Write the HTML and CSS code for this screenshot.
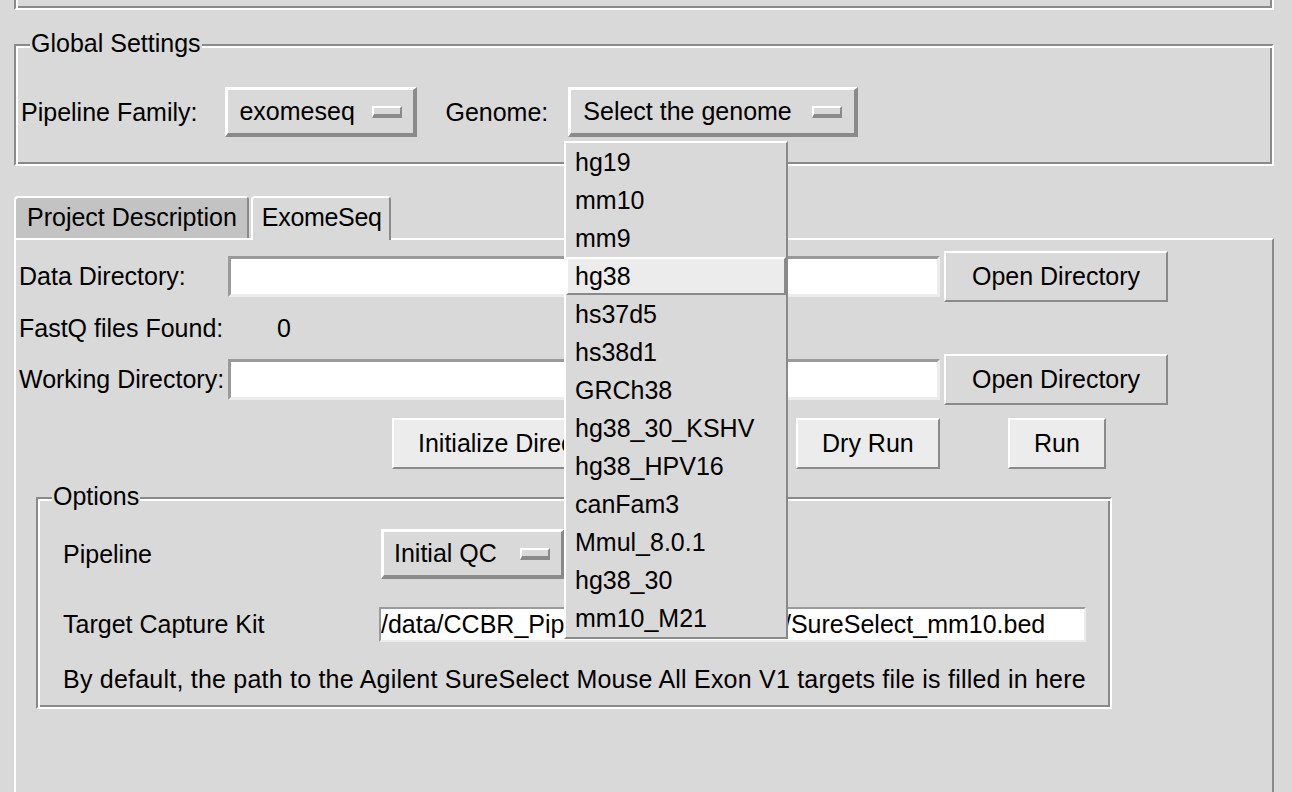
FILE: index.html
```html
<!DOCTYPE html>
<html lang="en">
<head>
<meta charset="utf-8">
<title>CCBR Pipeliner</title>
<link rel="stylesheet" href="styles.css">
</head>
<body>
<div class="top-frame"></div>

<section class="labelframe global">
  <div class="lf-title">Global Settings</div>
  <div class="global-row">
    <span class="label">Pipeline Family:</span>
    <div class="menubutton mb-family"><span>exomeseq</span><i class="indicator"></i></div>
    <span class="label genome-label">Genome:</span>
    <div class="menubutton mb-genome"><span>Select the genome</span><i class="indicator"></i></div>
  </div>
</section>

<div class="notebook">
  <div class="tabs">
    <div class="tab">Project Description</div>
    <div class="tab selected">ExomeSeq</div>
  </div>
  <div class="pane">
    <div class="dir-grid">
      <span class="label">Data Directory:</span>
      <input class="entry" type="text" aria-label="Data Directory">
      <button class="btn wide">Open Directory</button>

      <span class="label">FastQ files Found:</span>
      <span class="count">0</span>
      <span></span>

      <span class="label">Working Directory:</span>
      <input class="entry" type="text" aria-label="Working Directory">
      <button class="btn wide">Open Directory</button>
    </div>

    <div class="actions">
      <button class="btn light">Initialize Directory</button>
      <button class="btn light">Dry Run</button>
      <button class="btn light">Run</button>
    </div>

    <section class="labelframe options">
      <div class="lf-title">Options</div>
      <div class="opt-grid">
        <span class="opt-label">Pipeline</span>
        <div class="menubutton mb-pipeline"><span>Initial QC</span><i class="indicator"></i></div>
        <span class="opt-label">Target Capture Kit</span>
        <input class="entry kit" type="text" readonly value="/data/CCBR_Pipeliner/db/PipeDB/lib/SureSelect_mm10.bed" aria-label="Target Capture Kit">
      </div>
      <p class="help">By default, the path to the Agilent SureSelect Mouse All Exon V1 targets file is filled in here</p>
    </section>
  </div>
</div>

<ul class="menu">
  <li>hg19</li>
  <li>mm10</li>
  <li>mm9</li>
  <li class="active">hg38</li>
  <li>hs37d5</li>
  <li>hs38d1</li>
  <li>GRCh38</li>
  <li>hg38_30_KSHV</li>
  <li>hg38_HPV16</li>
  <li>canFam3</li>
  <li>Mmul_8.0.1</li>
  <li>hg38_30</li>
  <li>mm10_M21</li>
</ul>
</body>
</html>
```

FILE: styles.css
```css
* {
  box-sizing: border-box;
}

html,
body {
  margin: 0;
  padding: 0;
}

body {
  position: relative;
  width: 1292px;
  height: 792px;
  overflow: hidden;
  background: #d9d9d9;
  color: #000;
  font-family: "Liberation Sans", Arial, Helvetica, sans-serif;
  font-size: 25px;
  line-height: 29px;
}

/* ---------- groove frames ---------- */
.top-frame {
  margin-left: 14px;
  width: 1260px;
  height: 10px;
  border-style: solid;
  border-width: 0 2px 2px 2px;
  border-color: #8a8a8a #fff #fff #8a8a8a;
  box-shadow: inset 2px 0 0 #fff, inset -2px -2px 0 #8a8a8a;
}

.labelframe {
  border-style: solid;
  border-width: 2px;
  border-color: #8a8a8a #fff #fff #8a8a8a;
  box-shadow: inset 2px 2px 0 #fff, inset -2px -2px 0 #8a8a8a;
}

.lf-title {
  width: max-content;
  height: 29px;
  margin: -17px 0 0 14px;
  padding: 0 1px;
  background: #d9d9d9;
  white-space: nowrap;
}

/* ---------- global settings ---------- */
.global {
  margin: 34px 0 0 14px;
  width: 1260px;
  height: 122px;
}

.global-row {
  display: flex;
  align-items: center;
  height: 50px;
  margin-top: 29px;
  padding-left: 5px;
}

.label {
  white-space: nowrap;
}

.genome-label {
  margin-left: 28px;
}

/* ---------- menubuttons ---------- */
.menubutton {
  display: flex;
  align-items: center;
  height: 50px;
  border-style: solid;
  border-width: 3px 4px 4px 3px;
  border-color: #fff #8a8a8a #8a8a8a #fff;
  background: #d9d9d9;
  padding-left: 11px;
  white-space: nowrap;
}

.indicator {
  display: block;
  width: 30px;
  height: 12px;
  margin-left: auto;
  margin-right: 11px;
  border-style: solid;
  border-width: 2px 2px 4px 2px;
  border-color: #fff #8a8a8a #8a8a8a #fff;
  background: #d9d9d9;
}

.mb-family {
  width: 192px;
  margin-left: 28px;
}

.mb-genome {
  width: 290px;
  margin-left: 20px;
  padding-left: 12px;
}

.mb-genome .indicator {
  margin-right: 12px;
}

.mb-pipeline {
  width: 184px;
  margin-left: 2px;
  padding-left: 10px;
}

/* ---------- notebook ---------- */
.notebook {
  margin: 30px 0 0 14px;
  width: 1260px;
}

.tabs {
  display: flex;
  align-items: flex-start;
  gap: 2px;
  height: 42px;
}

.tab {
  height: 42px;
  padding: 0 10px 0 11px;
  border-style: solid;
  border-width: 2px 2px 0 2px;
  border-color: #fff #8a8a8a transparent #fff;
  border-radius: 4px 4px 0 0;
  background: #c3c3c3;
  line-height: 38px;
  white-space: nowrap;
}

.tab.selected {
  position: relative;
  z-index: 1;
  height: 44px;
  padding: 0 7px 0 9px;
  background: #d9d9d9;
  letter-spacing: -0.3px;
}

.pane {
  height: 560px;
  padding-top: 11px;
  border-style: solid;
  border-width: 2px 2px 0 2px;
  border-color: #fff #8a8a8a transparent #fff;
}

/* ---------- directory rows ---------- */
.dir-grid {
  display: grid;
  grid-template-columns: 208px 712px 224px;
  grid-template-rows: 51px 52px 51px;
  column-gap: 4px;
  align-items: center;
}

.dir-grid .label {
  padding-left: 3px;
}

.count {
  padding-left: 49px;
}

.entry {
  display: block;
  width: 712px;
  height: 41px;
  margin: 0;
  padding: 0;
  border-style: solid;
  border-width: 3px;
  border-color: #9a9a9a #ececec #ececec #9a9a9a;
  border-radius: 0;
  background: #fff;
  color: #000;
  font: inherit;
  outline: none;
}

.btn {
  height: 51px;
  margin: 0;
  padding: 0 24px;
  border-style: solid;
  border-width: 2px;
  border-color: #fff #8a8a8a #8a8a8a #fff;
  border-radius: 0;
  background: #d9d9d9;
  color: #000;
  font: inherit;
  line-height: 47px;
  white-space: nowrap;
}

.btn.wide {
  width: 224px;
  padding: 0;
}

.btn.light {
  background: #ececec;
}

.actions {
  display: grid;
  grid-template-columns: 404px 212px auto;
  margin-top: 13px;
  padding-left: 376px;
  height: 51px;
}

.actions .btn {
  justify-self: start;
}

/* ---------- options ---------- */
.options {
  margin: 28px 0 0 20px;
  width: 1076px;
  height: 212px;
}

.opt-grid {
  display: grid;
  grid-template-columns: 316px auto;
  grid-template-rows: 50px 35px;
  row-gap: 28px;
  align-items: center;
  margin-top: 18px;
  padding-left: 25px;
}

.opt-label {
  white-space: nowrap;
}

.entry.kit {
  width: 707px;
  height: 35px;
  border-width: 2px;
  line-height: 31px;
}

.help {
  margin: 23px 0 0 0;
  padding-left: 25px;
  line-height: 29px;
  letter-spacing: 0.22px;
  white-space: nowrap;
}

/* ---------- dropdown menu ---------- */
.menu {
  position: absolute;
  z-index: 10;
  left: 564px;
  top: 141px;
  width: 224px;
  margin: 0;
  padding: 0;
  list-style: none;
  border-style: solid;
  border-width: 2px;
  border-color: #fff #8a8a8a #8a8a8a #fff;
  background: #d9d9d9;
}

.menu li {
  height: 38px;
  padding-left: 9px;
  line-height: 38px;
  white-space: nowrap;
}

.menu li.active {
  padding-left: 7px;
  border-style: solid;
  border-width: 2px;
  border-color: #fff #8a8a8a #8a8a8a #fff;
  background: #ececec;
  line-height: 34px;
}
```
